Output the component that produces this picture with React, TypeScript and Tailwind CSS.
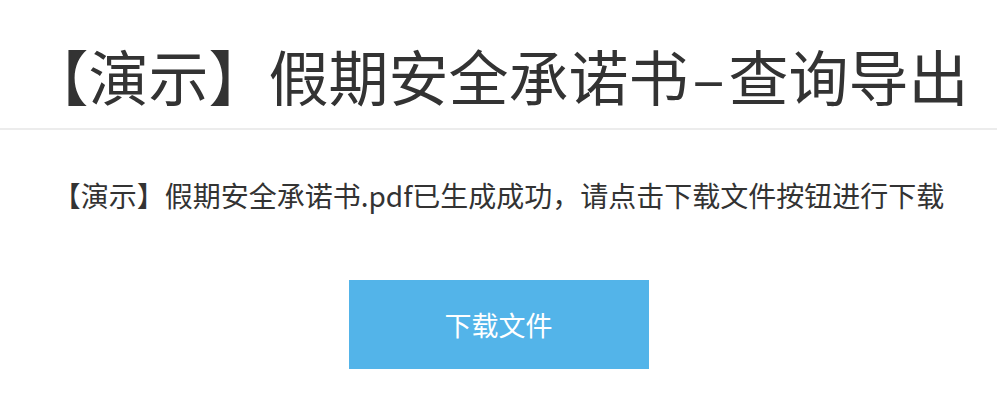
import React from "react";

export default function App() {
  const font = { fontFamily: '"Noto Sans CJK SC", "Noto Sans", sans-serif' };
  return (
    <div className="w-[1006px] h-[406px] bg-white text-[#333333] overflow-hidden" style={font}>
      <div className="w-[997px]">
        <div className="pt-[45px] pb-[23px] border-b-2 border-[#ececec] text-center">
          <h1 className="text-[60px] leading-[60px] font-normal whitespace-nowrap">
            【演示】假期安全承诺书<span className="px-[4px]">–</span>查询导出
          </h1>
        </div>
        <p className="mt-[51px] text-center text-[28px] leading-[28px] whitespace-nowrap">
          【演示】假期安全承诺书.pdf已生成成功，请点击下载文件按钮进行下载
        </p>
        <div className="mt-[71px] flex justify-center">
          <button className="w-[300px] h-[89px] bg-[#53b4e9] text-white text-[27px] leading-none">下载文件</button>
        </div>
      </div>
    </div>
  );
}
